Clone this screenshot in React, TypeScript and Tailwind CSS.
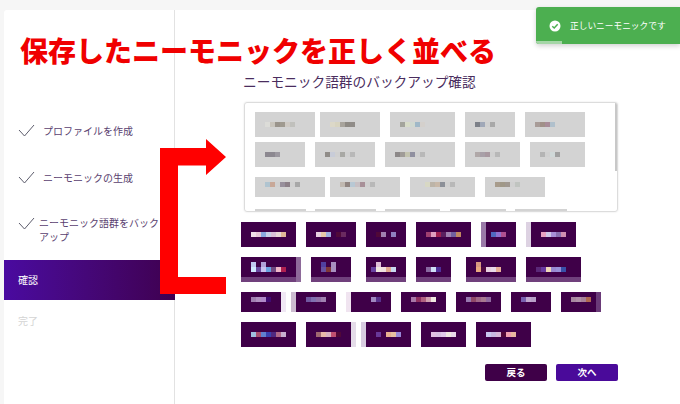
import React from "react";

type Chip = {
  s: number;
  e: number;
  c?: (string | null)[];
  top?: (string | null)[];
  off?: number;
  bottom?: string;
  bg?: string;
};

const G = "#d3d3d3";
const D = "#3f0048";
const jp = '"Noto Sans CJK JP", "Noto Sans", sans-serif';

const grayRows: { h: number; gap: number; chips: Chip[] }[] = [
  {
    h: 25,
    gap: 0,
    chips: [
      { s: 255, e: 315, off: 10, c: ["#dcdcd8", "#c8c4bc", "#9a948c", "#a09a90", "#cfcac4", "#c0c0bc"] },
      { s: 320, e: 380, off: 10, c: ["#dcd8c8", "#d8d4c0", "#a8a49c", "#8e8a84", "#908c88"] },
      { s: 390, e: 455, off: 10, c: ["#a4a49c", "#d8dcc8", "#d0d8d0", "#a0b8c8", "#d4d0cc"] },
      { s: 465, e: 515, off: 10, c: ["#7c8088", "#a0a8b8", "#d0d0d0", "#a8a8a8"] },
      { s: 525, e: 585, off: 10, c: ["#a89c98", "#a09088", "#a88c98", "#b0c0cc"] },
    ],
  },
  {
    h: 25,
    gap: 5,
    chips: [
      { s: 255, e: 305, off: 10, c: ["#8c8890", "#8c8890", "#9c98a0"] },
      { s: 315, e: 375, off: 10, c: ["#908c88", "#c8ccd8", "#d0d0d0", "#a8a8a4", "#d0d0d0", "#b8b8b8"] },
      { s: 385, e: 455, off: 10, c: ["#8c8888", "#a09c98", "#c4c4b0", "#9090a0", "#d0d0d0", "#b8b8b8"] },
      { s: 465, e: 520, off: 10, c: ["#b0a8a8", "#a8a0a8", "#a898a0", "#d0d0d0", "#b8b8b8"] },
      { s: 530, e: 585, off: 10, c: ["#b4b4b4", "#d0d0d0", "#d0d8d8", "#a0a0a0"] },
    ],
  },
  {
    h: 20,
    gap: 10,
    chips: [
      { s: 255, e: 325, off: 10, c: ["#b0c4d0", "#c8a898", "#d0d0d0", "#98909c", "#8c8088", "#d0d0d0", "#a8a8a8"] },
      { s: 330, e: 400, off: 10, c: ["#c0b8b0", "#908480", "#b8c8d4", "#c8c0c4", "#a89098", "#d0d0d0", "#b8b8b8"] },
      { s: 410, e: 475, off: 15, c: ["#d8d8c4", "#bcb4a8", "#c8b8a8", "#8c9098", "#d0d0d0", "#b8b8b8"] },
      { s: 485, e: 545, off: 10, c: ["#a89c8c", "#a09888", "#a09890", "#d0d0d0", "#c0c4c0"] },
    ],
  },
  {
    h: 25,
    gap: 12,
    chips: [
      { s: 255, e: 306 },
      { s: 315, e: 376 },
      { s: 385, e: 440 },
      { s: 450, e: 506 },
      { s: 515, e: 567 },
    ],
  },
];

const darkRows: { h: number; gap: number; chips: Chip[] }[] = [
  {
    h: 25,
    gap: 0,
    chips: [
      { s: 241, e: 296, off: 10, c: ["#f0dfe8", "#e8c8d8", "#8aa8e0", "#c8d0e8", "#d8c0d8", "#e8d8d8", "#e0b898"] },
      { s: 306, e: 356, off: 10, c: ["#e8d0e0", "#e8c8a8", "#a0b0e0", null, "#500a3a", "#6a2a60"] },
      { s: 366, e: 406, off: 10, c: ["#500838", "#a080b0", null, "#9080c0"] },
      { s: 416, e: 471, off: 10, c: ["#a04070", "#e0a0c0", "#a02050", "#5a2060", "#a080b0", "#7060a0", "#c08860"] },
      { s: 481, e: 486, bg: "#9a7aa8" },
      { s: 486, e: 516, off: 5, c: ["#5068c0", "#9070d0", "#b05090"], bg: D },
      { s: 526, e: 531, bg: "#ddd2e2" },
      { s: 531, e: 576, off: 10, c: ["#e8a0c0", "#d0c8e8", "#a890d8", "#8870b0", "#d090b0"] },
    ],
  },
  {
    h: 25,
    gap: 0,
    chips: [
      { s: 241, e: 296, off: 10, top: ["#c0c8f0", null, "#b0a0d8"], c: ["#d0e8ff", "#6848a0", "#c8c0f0", "#68a0e0", "#704880", "#f0b8c8", "#b02050"], bottom: "#70407c" },
      { s: 296, e: 301, bg: "#8e6a9a" },
      { s: 311, e: 351, off: 10, top: ["#5040a0", null, "#a890c0"], c: ["#6850a0", "#803838", "#a890c0"], bottom: "#70407c" },
      { s: 366, e: 406, off: 5, top: [null, "#e0c0d8"], c: ["#6840a0", "#f0e8e0", "#f0e0e0", "#e0a890", "#c8d8f0"], bottom: "#70407c" },
      { s: 416, e: 451, off: 10, c: ["#8868a0", "#d0e0f8", "#50309a"], bottom: "#70407c" },
      { s: 466, e: 516, off: 10, top: ["#d89880"], c: ["#e8a880", "#500840", "#e8d0e0", "#e8d8e8", "#e8b098"], bottom: "#70407c" },
      { s: 526, e: 581, off: 10, c: ["#5a2878", "#6838a0", "#f0d8b8", "#9888d0", "#9890d8", "#3850a8"], bottom: "#70407c" },
    ],
  },
  {
    h: 20,
    gap: 0,
    chips: [
      { s: 241, e: 281, off: 10, c: ["#a080b0", "#b090c0", "#b088c8", "#400a70"] },
      { s: 281, e: 286, bg: "#f0e8f4" },
      { s: 291, e: 296, bg: "#ccbcd0" },
      { s: 296, e: 336, off: 10, c: ["#7058a0", "#8070b0", "#9070a8", "#a080b0"] },
      { s: 346, e: 351, bg: "#f0e4f0" },
      { s: 351, e: 391, off: 20, c: ["#a088c0", "#58308c"] },
      { s: 401, e: 446, off: 10, c: ["#a878a8", "#903060", "#b06080", "#d0a0b0", "#f0e8e0"] },
      { s: 456, e: 501, off: 10, c: ["#9878b0", "#904868", "#a06888", "#a87890", "#9068a0"] },
      { s: 511, e: 551, off: 10, c: ["#7860b0", "#c0a8d0", "#b8a0c8"] },
      { s: 561, e: 596, off: 10, c: ["#a888a0", "#b090a8", "#a88098", "#b06850"] },
      { s: 596, e: 601, bg: "#6a3a78" },
    ],
  },
  {
    h: 25,
    gap: 0,
    chips: [
      { s: 241, e: 296, off: 10, c: ["#a0c0e0", "#a85070", "#6080d0", "#3840b0", "#502880", "#b06888", "#c8b0d0"] },
      { s: 306, e: 351, off: 10, c: ["#a06870", "#e8b8a8", "#d8b0c0", "#c05070", "#500838"] },
      { s: 351, e: 356, bg: "#e4dce8" },
      { s: 361, e: 366, bg: "#d8cce0" },
      { s: 366, e: 411, off: 10, c: ["#683898", null, "#e8b090", "#e8c0a0", "#9888d8"] },
      { s: 421, e: 466, off: 10, c: ["#e0c0e0", "#d8c0e0", "#e0c8e8", "#f0e8e0", "#e8d8e8"] },
      { s: 476, e: 531, off: 10, c: ["#c8c8f0", "#c8b8e0", "#d8b8d8", "#500838", "#f0a0b0", "#e8b8a0"] },
    ],
  },
];

function Strip({ cells }: { cells: (string | null)[] }) {
  return (
    <div className="flex h-[5px]">
      {cells.map((color, i) => (
        <div key={i} className="h-[5px] w-[5px]" style={{ backgroundColor: color ?? "transparent" }} />
      ))}
    </div>
  );
}

function Row({ h, chips, color, from }: { h: number; chips: Chip[]; color: string; from: number }) {
  let prev = from;
  return (
    <div className="flex shrink-0">
      {chips.map((chip, i) => {
        const ml = chip.s - prev;
        prev = chip.e;
        const pt = chip.top ? 5 : h === 20 ? 5 : 10;
        return (
          <div
            key={i}
            className="box-border shrink-0"
            style={{
              marginLeft: ml,
              width: chip.e - chip.s,
              height: h,
              paddingTop: pt,
              paddingLeft: chip.off ?? 0,
              backgroundColor: chip.bg ?? color,
              borderBottom: chip.bottom ? `5px solid ${chip.bottom}` : undefined,
            }}
          >
            {chip.top && <Strip cells={chip.top} />}
            {chip.c && <Strip cells={chip.c} />}
          </div>
        );
      })}
    </div>
  );
}

function Check() {
  return (
    <svg width="17" height="13" viewBox="0 0 17 13" className="shrink-0" fill="none" stroke="#5c5c6c" strokeWidth="1">
      <path d="M1 6 L6.5 12 L16 1" />
    </svg>
  );
}

export default function App() {
  return (
    <div className="relative h-[404px] w-[680px] overflow-hidden bg-[#f6f6f6] pl-1 pt-[10px]" style={{ fontFamily: jp }}>
      <div className="flex h-[394px] w-[676px] rounded-tl-[3px] bg-white">
        {/* Sidebar */}
        <div className="flex h-full w-[171px] shrink-0 flex-col border-r border-[#e2e2e2] pt-[100px] text-[10px] text-[#5a3f70]">
          <div className="flex h-10 items-center gap-2 pl-[14px]">
            <Check />
            <span>プロファイルを作成</span>
          </div>
          <div className="mt-[7px] flex h-10 items-center gap-2 pl-[14px]">
            <Check />
            <span>ニーモニックの生成</span>
          </div>
          <div className="mt-[13px] flex h-[42px] items-start gap-1 pl-[14px] pt-[7px]">
            <Check />
            <span className="-mt-[1px] w-[122px] leading-[14px]">ニーモニック語群をバックアップ</span>
          </div>
          <div className="mt-2 flex h-10 w-[171px] items-center bg-gradient-to-r from-[#4a0aa0] to-[#3f0050] pb-[2px] pl-[14px] text-white">
            確認
          </div>
          <div className="mt-px flex h-10 items-center pb-[2px] pl-[14px] text-[#d4d4d4]">完了</div>
        </div>

        {/* Main */}
        <div className="flex flex-col pl-[66px]">
          <div className="ml-[2px] mt-[61px] h-5 whitespace-nowrap text-[13.7px] leading-5 text-[#4a2d5e]">
            ニーモニック語群のバックアップ確認
          </div>
          <div className="relative ml-[3px] mt-[11px] box-border flex h-[110px] w-[374px] shrink-0 flex-col overflow-hidden rounded-[3px] border border-[#dcdcdc] pt-[9px] shadow-[0_0_2px_rgba(0,0,0,0.12)]">
            <div className="flex flex-col">
              {grayRows.map((row, i) => (
                <div key={i} style={{ marginTop: row.gap }}>
                  <Row h={row.h} chips={row.chips} color={G} from={245} />
                </div>
              ))}
            </div>
            <div className="absolute right-0 top-0 h-[68px] w-[2px] bg-[#c8c8c8]" />
          </div>
          <div className="mt-[10px] flex flex-col gap-[10px]">
            {darkRows.map((row, i) => (
              <Row key={i} h={row.h} chips={row.chips} color={D} from={241} />
            ))}
          </div>
          <div className="mt-[17px] flex w-[377px] justify-end gap-[9px]">
            <div className="flex h-[17px] w-[62px] items-center justify-center rounded-[2px] bg-[#3f0048] text-[9.5px] font-bold text-white">
              戻る
            </div>
            <div className="flex h-[17px] w-[62px] items-center justify-center rounded-[2px] bg-[#4a0a9a] text-[9.5px] font-bold text-white">
              次へ
            </div>
          </div>
        </div>
      </div>

      {/* Red annotation */}
      <div className="absolute left-[20px] top-[30px] whitespace-nowrap text-[28px] font-black leading-10 text-[#f00000]">
        保存したニーモニックを正しく並べる
      </div>
      <svg className="absolute left-0 top-0" width="240" height="300" viewBox="0 0 240 300">
        <path d="M160 148 H206 V139 L226 157 L206 175 V165.5 H178 V277 H226 V294 H160 Z" fill="#ff0000" />
      </svg>

      {/* Toast */}
      <div className="absolute left-[536px] top-[7px] flex h-[37px] w-[144px] items-center rounded-l-[3px] bg-[#4caf50] pl-[13px] text-[8.7px] text-white shadow-[0_2px_5px_rgba(0,0,0,0.18)]">
        <svg width="12" height="12" viewBox="0 0 12 12" className="mr-[9px] shrink-0">
          <circle cx="6" cy="6" r="5.5" fill="#fff" />
          <path d="M3.3 6.2 L5.2 8 L8.7 4.3" fill="none" stroke="#4caf50" strokeWidth="1.5" />
        </svg>
        <span className="whitespace-nowrap">正しいニーモニックです</span>
        <div className="absolute bottom-0 left-0 h-[3px] w-[26px] rounded-bl-[3px] bg-[#a5d6a7]" />
      </div>
    </div>
  );
}
